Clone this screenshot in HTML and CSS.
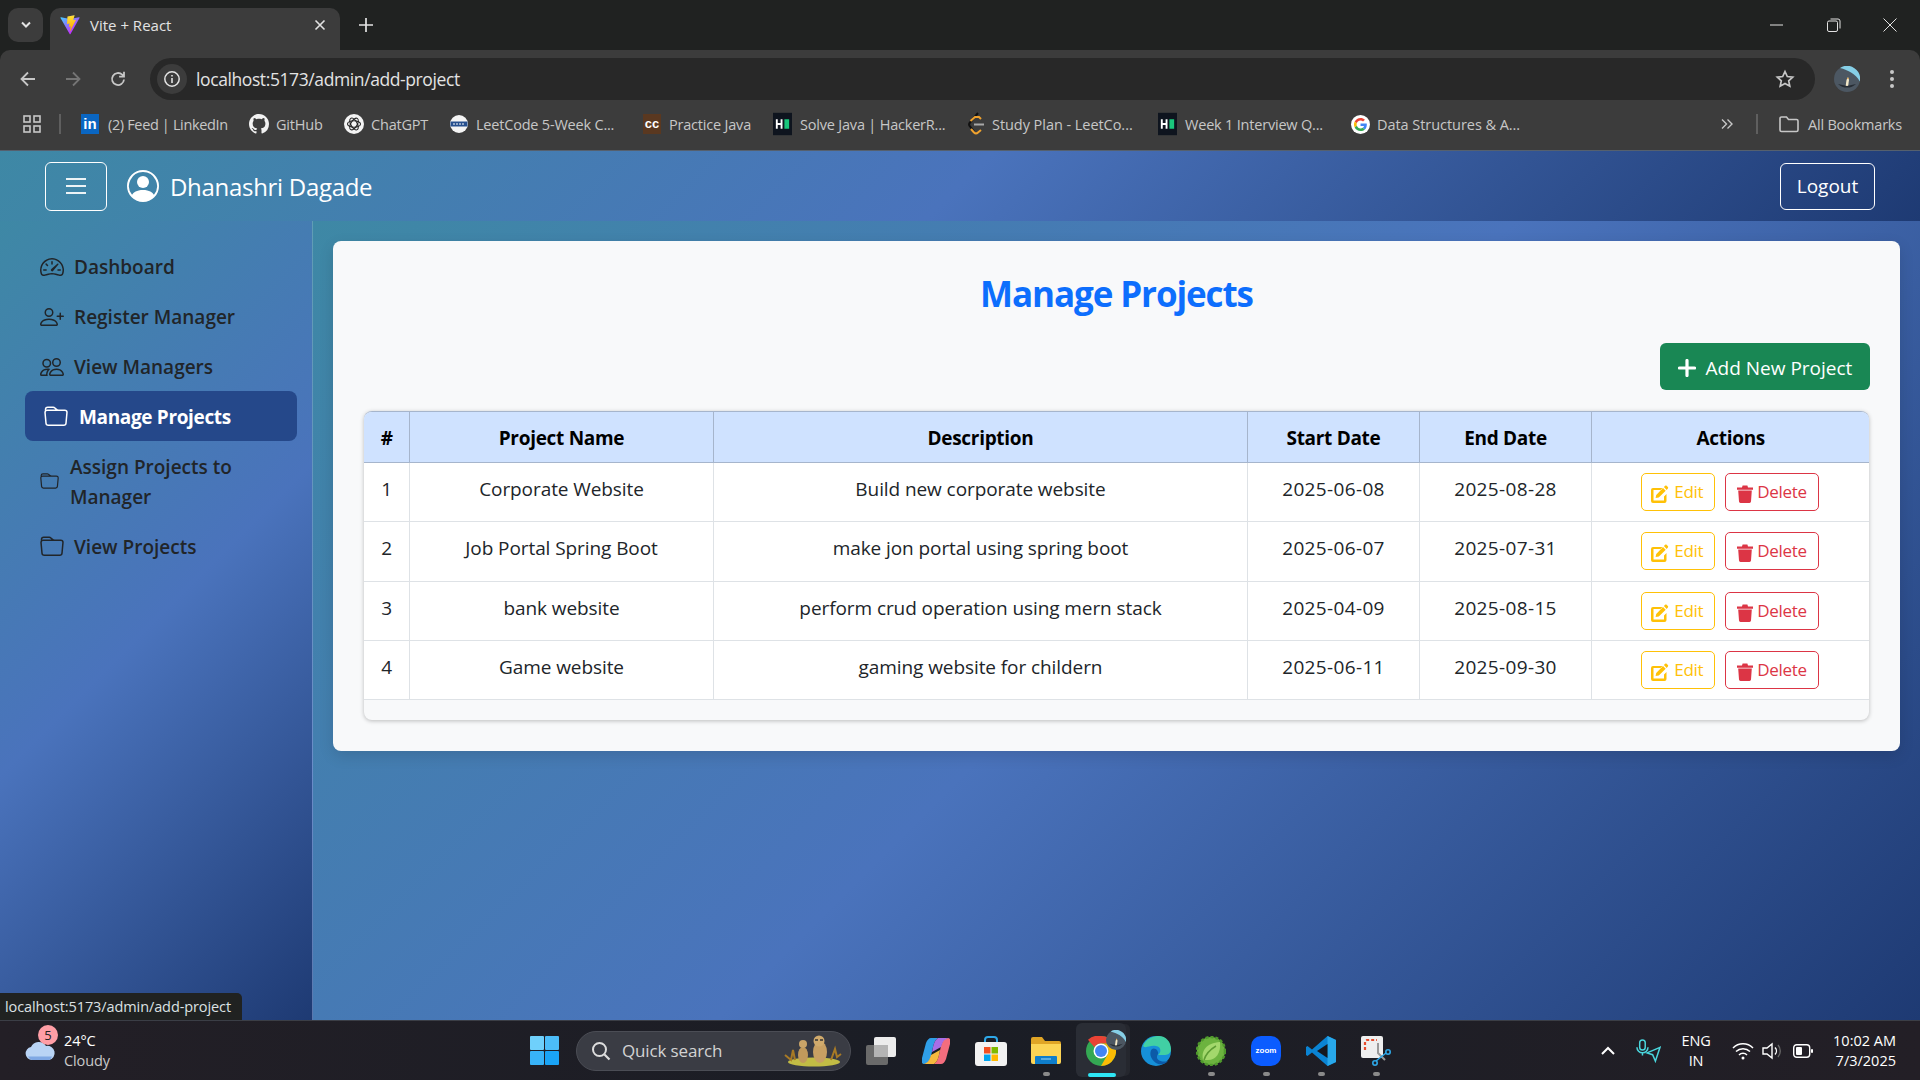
FILE: index.html
```html
<!DOCTYPE html>
<html lang="en">
<head>
<meta charset="utf-8">
<title>Vite + React</title>
<link rel="stylesheet" href="styles.css">
</head>
<body>
<svg class="defs" width="0" height="0">
  <defs>
    <linearGradient id="vite-a" gradientUnits="userSpaceOnUse" x1="6" y1="33" x2="235" y2="344"><stop offset="0" stop-color="#41D1FF"/><stop offset="1" stop-color="#BD34FE"/></linearGradient>
    <linearGradient id="vite-b" gradientUnits="userSpaceOnUse" x1="194.650" y1="8.800" x2="236.080" y2="292.990"><stop offset="0" stop-color="#FFEA83"/><stop offset=".08" stop-color="#FFDD35"/><stop offset="1" stop-color="#FFA800"/></linearGradient>
  </defs>
  <symbol id="i-folder" viewBox="0 0 16 16"><path d="M.54 3.87.5 3a2 2 0 0 1 2-2h3.672a2 2 0 0 1 1.414.586l.828.828A2 2 0 0 0 9.828 3h3.982a2 2 0 0 1 1.992 2.181l-.637 7A2 2 0 0 1 13.174 14H2.826a2 2 0 0 1-1.991-1.819l-.637-7a2 2 0 0 1 .342-1.31zM2.19 4a1 1 0 0 0-.996 1.09l.637 7a1 1 0 0 0 .995.91h10.348a1 1 0 0 0 .995-.91l.637-7A1 1 0 0 0 13.81 4zm4.69-1.707A1 1 0 0 0 6.172 2H2.5a1 1 0 0 0-1 .981l.006.139q.323-.119.684-.12h5.396z"/></symbol>
  <symbol id="i-edit" viewBox="0 0 18 18"><path d="M16.9 1.9 15.6.8c-.4-.4-1-.4-1.4 0l-1.3 1.3 2.8 2.8 1.2-1.3c.4-.5.4-1.2 0-1.7zM12 3 5.2 9.9l-.6 3.2 3.2-.6L14.700 5.700z"/><path d="M13 15.500H2.500V5h7l2-2H2A2 2 0 0 0 0 5v11a2 2 0 0 0 2 2h11.500a2 2 0 0 0 2-2V9l-2.500 2.500z"/></symbol>
  <symbol id="i-trash" viewBox="0 0 16 18"><path d="M0 2.500h5L5.600.600h4.800L11 2.500h5v2.200H0zM1.200 5.600h13.600l-.8 11a1.500 1.500 0 0 1-1.500 1.400H3.500A1.500 1.500 0 0 1 2 16.600z"/></symbol>
  <symbol id="i-hr" viewBox="0 0 20 24"><rect width="20" height="24" fill="#0e141e"/><path d="M3 7h2v4h3V7h2v10H8v-4H5v4H3z" fill="#fff"/><rect x="12" y="7" width="5" height="10" fill="#1ac77c"/></symbol>
  <symbol id="i-avatar" viewBox="0 0 26 26"><circle cx="13" cy="13" r="13" fill="#4c5762"/><path d="M6 2a13 13 0 0 1 19.800 13.500C22 8 14 4 6 2z" fill="#86cfe6"/><path d="M11.500 21l1-7 1.500-3 1 3-1 7z" fill="#f4e9c9"/><path d="M13.200 13l.8-2 .6 2z" fill="#f0a030"/><path d="M4 18a13 13 0 0 0 18 0l-9 2z" fill="#262c33"/></symbol>
</svg>

<header class="titlebar">
  <div class="tab-search"><svg width="12" height="8" viewBox="0 0 12 8"><path d="M2 1.500 6 5.500l4-4" fill="none" stroke="#e3e3e3" stroke-width="2"/></svg></div>
  <div class="tab">
    <svg class="favicon" width="20" height="20" viewBox="0 0 410 404"><path d="M399.641 59.525L215.643 388.545C211.844 395.338 202.084 395.378 198.228 388.618L10.582 59.556C6.381 52.190 12.680 43.270 21.028 44.760L205.223 77.682C206.398 77.892 207.601 77.890 208.776 77.676L389.119 44.806C397.439 43.289 403.768 52.140 399.641 59.525Z" fill="url(#vite-a)"/><path d="M292.965 1.574L156.801 28.255C154.563 28.694 152.906 30.590 152.771 32.866L144.395 174.330C144.198 177.662 147.258 180.248 150.510 179.498L188.420 170.749C191.967 169.931 195.172 173.055 194.443 176.622L183.180 231.775C182.422 235.487 185.907 238.661 189.532 237.560L212.947 230.446C216.577 229.344 220.065 232.527 219.297 236.242L201.398 322.875C200.278 328.294 207.486 331.249 210.492 326.603L212.500 323.500L323.454 102.072C325.312 98.365 322.108 94.137 318.036 94.923L279.014 102.454C275.347 103.161 272.227 99.746 273.262 96.158L298.731 7.867C299.767 4.273 296.636 .855 292.965 1.574Z" fill="url(#vite-b)"/></svg>
    <span class="tab-title">Vite + React</span>
    <svg class="tab-x" width="12" height="12" viewBox="0 0 12 12"><path d="M1.500 1.500l9 9m0-9-9 9" stroke="#e3e3e3" stroke-width="1.600"/></svg>
  </div>
  <svg class="newtab" width="14" height="14" viewBox="0 0 14 14"><path d="M7 0v14M0 7h14" stroke="#e3e3e3" stroke-width="1.700"/></svg>
  <div class="winctl">
    <svg width="14" height="14" viewBox="0 0 14 14"><path d="M0 7h13" stroke="#e3e3e3" stroke-width="1"/></svg>
    <svg width="14" height="14" viewBox="0 0 14 14"><rect x=".5" y="3" width="10" height="10.500" rx="1.500" fill="none" stroke="#e3e3e3"/><path d="M3.500 1h7.500a2 2 0 0 1 2 2v7.500" fill="none" stroke="#e3e3e3"/></svg>
    <svg width="14" height="14" viewBox="0 0 14 14"><path d="M.5.500l13 13m0-13-13 13" stroke="#e3e3e3"/></svg>
  </div>
</header>

<div class="toolbar">
  <div class="navbtns">
    <svg width="18" height="18" viewBox="0 0 18 18"><path d="M16 9H3m6-6.500L2.500 9 9 15.500" fill="none" stroke="#c7c7c7" stroke-width="1.800"/></svg>
    <svg width="18" height="18" viewBox="0 0 18 18"><path d="M2 9h13M9 2.500 15.500 9 9 15.500" fill="none" stroke="#757575" stroke-width="1.800"/></svg>
    <svg width="18" height="18" viewBox="0 0 18 18"><path d="M15 9.500A6 6 0 1 1 13.200 4.700L15 6.500M15 1.800v4.900h-4.900" fill="none" stroke="#c7c7c7" stroke-width="1.800"/></svg>
  </div>
  <div class="omnibox">
    <div class="info"><svg width="18" height="18" viewBox="0 0 18 18"><circle cx="9" cy="9" r="7.200" fill="none" stroke="#e3e3e3" stroke-width="1.500"/><path d="M9 8v5M9 5v1.500" stroke="#e3e3e3" stroke-width="1.600"/></svg></div>
    <span class="url">localhost:5173/admin/add-project</span>
    <svg class="star" width="20" height="20" viewBox="0 0 20 20"><path d="M10 2.500l2.300 5 5.400.6-4 3.700 1.100 5.400L10 14.500l-4.800 2.700 1.100-5.400-4-3.700 5.400-.6z" fill="none" stroke="#c7c7c7" stroke-width="1.700"/></svg>
  </div>
  <svg class="avatar" width="26" height="26"><use href="#i-avatar"/></svg>
  <svg class="dots" width="4" height="18" viewBox="0 0 4 18"><circle cx="2" cy="2" r="2" fill="#c7c7c7"/><circle cx="2" cy="9" r="2" fill="#c7c7c7"/><circle cx="2" cy="16" r="2" fill="#c7c7c7"/></svg>
</div>

<nav class="bookmarks">
  <svg class="apps" width="18" height="18" viewBox="0 0 18 18"><g fill="none" stroke="#c7c7c7" stroke-width="1.600"><rect x="1" y="1" width="6" height="6"/><rect x="11" y="1" width="6" height="6"/><rect x="1" y="11" width="6" height="6"/><rect x="11" y="11" width="6" height="6"/></g></svg>
  <span class="bm-sep"></span>
  <a class="bm bm-li"><span class="li-icon">in</span><span>(2) Feed | LinkedIn</span></a>
  <a class="bm bm-gh"><svg width="20" height="20" viewBox="0 0 16 16" fill="#f2f2f2"><path d="M8 0C3.580 0 0 3.580 0 8c0 3.540 2.290 6.530 5.470 7.590.4.070.55-.17.55-.38 0-.19-.01-.82-.01-1.490-2.010.37-2.530-.49-2.690-.94-.09-.23-.48-.94-.82-1.130-.28-.15-.68-.52-.01-.53.63-.01 1.080.58 1.230.82.72 1.210 1.870.87 2.330.66.070-.52.28-.87.51-1.070-1.780-.2-3.640-.89-3.640-3.950 0-.87.31-1.590.82-2.150-.08-.2-.36-1.020.08-2.120 0 0 .67-.21 2.200.82.64-.18 1.320-.27 2-.27s1.360.09 2 .27c1.530-1.040 2.200-.82 2.200-.82.44 1.100.16 1.920.08 2.120.51.56.82 1.270.82 2.150 0 3.070-1.870 3.750-3.650 3.950.29.25.54.73.54 1.480 0 1.070-.01 1.930-.01 2.200 0 .21.15.46.55.38A8.010 8.010 0 0 0 16 8c0-4.420-3.580-8-8-8"/></svg><span>GitHub</span></a>
  <a class="bm bm-gpt"><svg width="20" height="20" viewBox="0 0 20 20"><circle cx="10" cy="10" r="10" fill="#f4f4f4"/><g fill="none" stroke="#222" stroke-width="1.100"><ellipse cx="10" cy="10" rx="6.500" ry="3.200"/><ellipse cx="10" cy="10" rx="6.500" ry="3.200" transform="rotate(60 10 10)"/><ellipse cx="10" cy="10" rx="6.500" ry="3.200" transform="rotate(120 10 10)"/></g></svg><span>ChatGPT</span></a>
  <a class="bm bm-lc"><svg width="18" height="18" viewBox="0 0 18 18"><circle cx="9" cy="9" r="9" fill="#f4f4f4"/><path d="M.5 6.500h17v5H.5z" fill="#27508f"/><path d="M3 9h12" stroke="#fff" stroke-width="1" stroke-dasharray="2 1"/></svg><span>LeetCode 5-Week C...</span></a>
  <a class="bm bm-cc"><span class="cc-icon">cc</span><span>Practice Java</span></a>
  <a class="bm bm-hr1"><svg width="19" height="24" viewBox="0 0 20 24"><use href="#i-hr"/></svg><span>Solve Java | HackerR...</span></a>
  <a class="bm bm-plan"><svg width="18" height="24" viewBox="0 0 18 24"><path d="M11 1 3 10.500a3 3 0 0 0 0 4l4 5" fill="none" stroke="#111" stroke-width="2"/><path d="M4 17l3 3.500a3 3 0 0 0 4 0l3-2.500M3.500 9 8 5h4l2 2" fill="none" stroke="#f0a22e" stroke-width="2"/><path d="M7 12.500h10" stroke="#a8a8a8" stroke-width="2"/></svg><span>Study Plan - LeetCo...</span></a>
  <a class="bm bm-hr2"><svg width="19" height="24" viewBox="0 0 20 24"><use href="#i-hr"/></svg><span>Week 1 Interview Q...</span></a>
  <a class="bm bm-g"><svg width="19" height="19" viewBox="0 0 48 48"><circle cx="24" cy="24" r="24" fill="#fff"/><g transform="translate(7.500 7.500) scale(.69)"><path fill="#EA4335" d="M24 9.500c3.500 0 6.700 1.200 9.200 3.600l6.900-6.900C35.900 2.400 30.500 0 24 0 14.600 0 6.500 5.400 2.600 13.200l8 6.200C12.500 13.700 17.800 9.500 24 9.500z"/><path fill="#4285F4" d="M47 24.500c0-1.600-.1-3.100-.4-4.500H24v9h12.900c-.6 3-2.200 5.500-4.700 7.200l7.700 6C44.400 38 47 31.900 47 24.500z"/><path fill="#FBBC05" d="M10.500 28.600c-.5-1.500-.8-3-.8-4.600s.3-3.200.8-4.600l-8-6.200C.9 16.500 0 20.100 0 24s.9 7.500 2.600 10.800z"/><path fill="#34A853" d="M24 48c6.500 0 11.900-2.100 15.900-5.800l-7.700-6c-2.100 1.400-4.900 2.300-8.200 2.300-6.300 0-11.500-4.200-13.400-9.900l-8 6.200C6.500 42.600 14.600 48 24 48z"/></g></svg><span>Data Structures &amp; A...</span></a>
  <span class="bm-spacer"></span>
  <svg class="more" width="12" height="12" viewBox="0 0 12 12"><path d="M1 1.500 5.500 6 1 10.500M6.500 1.500 11 6l-4.500 4.500" fill="none" stroke="#c7c7c7" stroke-width="1.400"/></svg>
  <span class="bm-sep bm-sep2"></span>
  <a class="bm bm-all"><svg width="20" height="20" viewBox="0 0 20 20"><path d="M1 4.500a1.500 1.500 0 0 1 1.500-1.500h5l2 2.500h8A1.500 1.500 0 0 1 19 7v9a1.500 1.500 0 0 1-1.500 1.500h-15A1.500 1.500 0 0 1 1 16z" fill="none" stroke="#c7c7c7" stroke-width="1.600"/></svg><span>All Bookmarks</span></a>
</nav>

<div class="app">
  <div class="topnav">
    <button class="burger"><svg width="24" height="20" viewBox="0 0 24 20"><path d="M2 3h20M2 10h20M2 17h20" stroke="#fff" stroke-width="1.800" opacity=".9"/></svg></button>
    <svg class="user" width="32" height="32" viewBox="0 0 16 16" fill="#fff"><path d="M11 6a3 3 0 1 1-6 0 3 3 0 0 1 6 0"/><path fill-rule="evenodd" d="M0 8a8 8 0 1 1 16 0A8 8 0 0 1 0 8m8-7a7 7 0 0 0-5.468 11.370C3.242 11.226 4.805 10 8 10s4.757 1.225 5.468 2.370A7 7 0 0 0 8 1"/></svg>
    <span class="brand">Dhanashri Dagade</span>
    <button class="logout">Logout</button>
  </div>
  <div class="content">
    <aside class="sidebar">
      <a class="item"><svg class="ico" viewBox="0 0 16 16"><path d="M8 4a.5.5 0 0 1 .5.500V6a.5.5 0 0 1-1 0V4.500A.5.5 0 0 1 8 4M3.732 5.732a.5.5 0 0 1 .707 0l.915.914a.5.5 0 1 1-.708.708l-.914-.915a.5.5 0 0 1 0-.707M2 10a.5.5 0 0 1 .5-.5h1.586a.5.5 0 0 1 0 1H2.500A.5.5 0 0 1 2 10m9.500 0a.5.5 0 0 1 .5-.5h1.500a.5.5 0 0 1 0 1H12a.5.5 0 0 1-.5-.5m.754-4.246a.39.39 0 0 0-.527-.02L7.547 9.310a.91.91 0 1 0 1.302 1.258l3.434-4.297a.39.39 0 0 0-.029-.518z"/><path fill-rule="evenodd" d="M0 10a8 8 0 1 1 15.547 2.661c-.442 1.253-1.845 1.602-2.932 1.250C11.309 13.488 9.475 13 8 13c-1.474 0-3.310.488-4.615.911-1.087.352-2.490.003-2.932-1.250A8 8 0 0 1 0 10m8-7a7 7 0 0 0-6.603 9.329c.203.575.923.876 1.680.630C4.397 12.533 6.358 12 8 12s3.604.532 4.923.96c.757.245 1.477-.056 1.680-.631A7 7 0 0 0 8 3"/></svg><span>Dashboard</span></a>
      <a class="item"><svg class="ico" viewBox="0 0 16 16"><path d="M6 8a3 3 0 1 0 0-6 3 3 0 0 0 0 6m2-3a2 2 0 1 1-4 0 2 2 0 0 1 4 0m4 8c0 1-1 1-1 1H1s-1 0-1-1 1-4 6-4 6 3 6 4m-1-.004c-.001-.246-.154-.986-.832-1.664C9.516 10.680 8.289 10 6 10s-3.516.680-4.168 1.332c-.678.678-.83 1.418-.832 1.664z"/><path fill-rule="evenodd" d="M13.500 5a.5.5 0 0 1 .5.500V7h1.500a.5.5 0 0 1 0 1H14v1.500a.5.5 0 0 1-1 0V8h-1.500a.5.5 0 0 1 0-1H13V5.500a.5.5 0 0 1 .5-.5"/></svg><span>Register Manager</span></a>
      <a class="item"><svg class="ico" viewBox="0 0 16 16"><path d="M15 14s1 0 1-1-1-4-5-4-5 3-5 4 1 1 1 1zm-7.978-1L7 12.996c.001-.264.167-1.030.76-1.720C8.312 10.629 9.282 10 11 10c1.717 0 2.687.63 3.240 1.276.593.69.758 1.457.76 1.720l-.008.002-.014.002zM11 7a2 2 0 1 0 0-4 2 2 0 0 0 0 4m3-2a3 3 0 1 1-6 0 3 3 0 0 1 6 0M6.936 9.280a6 6 0 0 0-1.230-.247A7 7 0 0 0 5 9c-4 0-5 3-5 4q0 1 1 1h4.216A2.240 2.240 0 0 1 5 13c0-1.010.377-2.042 1.090-2.904.243-.294.526-.569.846-.816M4.920 10A5.500 5.500 0 0 0 4 13H1c0-.26.164-1.030.76-1.724.545-.636 1.492-1.256 3.160-1.275ZM1.500 5.500a3 3 0 1 1 6 0 3 3 0 0 1-6 0m3-2a2 2 0 1 0 0 4 2 2 0 0 0 0-4"/></svg><span>View Managers</span></a>
      <a class="item active"><svg class="ico"><use href="#i-folder"/></svg><span>Manage Projects</span></a>
      <a class="item item-wrap"><svg class="ico"><use href="#i-folder"/></svg><span>Assign Projects to Manager</span></a>
      <a class="item"><svg class="ico"><use href="#i-folder"/></svg><span>View Projects</span></a>
    </aside>
    <main class="main">
      <section class="card">
        <h1 class="title">Manage Projects</h1>
        <div class="actions">
          <button class="add"><svg width="18" height="18" viewBox="0 0 18 18"><path d="M9 1.500v15M1.500 9h15" stroke="#fff" stroke-width="3.200" stroke-linecap="round"/></svg>Add New Project</button>
        </div>
        <div class="table-wrap">
          <table class="projects">
            <colgroup><col class="c-n"><col class="c-name"><col class="c-desc"><col class="c-date"><col class="c-date"><col class="c-act"></colgroup>
            <thead><tr><th>#</th><th>Project Name</th><th>Description</th><th>Start Date</th><th>End Date</th><th>Actions</th></tr></thead>
            <tbody>
              <tr><td>1</td><td>Corporate Website</td><td>Build new corporate website</td><td>2025-06-08</td><td>2025-08-28</td><td><a class="btn btn-edit"><svg class="bico"><use href="#i-edit"/></svg>Edit</a><a class="btn btn-del"><svg class="bico"><use href="#i-trash"/></svg>Delete</a></td></tr>
              <tr><td>2</td><td>Job Portal Spring Boot</td><td>make jon portal using spring boot</td><td>2025-06-07</td><td>2025-07-31</td><td><a class="btn btn-edit"><svg class="bico"><use href="#i-edit"/></svg>Edit</a><a class="btn btn-del"><svg class="bico"><use href="#i-trash"/></svg>Delete</a></td></tr>
              <tr><td>3</td><td>bank website</td><td>perform crud operation using mern stack</td><td>2025-04-09</td><td>2025-08-15</td><td><a class="btn btn-edit"><svg class="bico"><use href="#i-edit"/></svg>Edit</a><a class="btn btn-del"><svg class="bico"><use href="#i-trash"/></svg>Delete</a></td></tr>
              <tr><td>4</td><td>Game website</td><td>gaming website for childern</td><td>2025-06-11</td><td>2025-09-30</td><td><a class="btn btn-edit"><svg class="bico"><use href="#i-edit"/></svg>Edit</a><a class="btn btn-del"><svg class="bico"><use href="#i-trash"/></svg>Delete</a></td></tr>
            </tbody>
          </table>
        </div>
      </section>
    </main>
  </div>
  <div class="status">localhost:5173/admin/add-project</div>
</div>

<footer class="taskbar">
  <div class="weather">
    <div class="wx-icon">
      <svg width="32" height="20" viewBox="0 0 32 20"><path d="M8 19a6.500 6.500 0 0 1-1-12.900A8.500 8.500 0 0 1 22 5a7 7 0 0 1 3 14z" fill="#b9d4f5"/><path d="M4 15.500h24a5 5 0 0 1-3 3.500H8a6 6 0 0 1-4-3.500z" fill="#7fa8e4"/></svg>
      <span class="wx-badge">5</span>
    </div>
    <div class="wx-text"><span class="wx-temp">24°C</span><span class="wx-cond">Cloudy</span></div>
  </div>
  <div class="tasks">
    <div class="slot win"><svg width="29" height="29" viewBox="0 0 29 29"><rect width="14" height="14" rx="1" fill="#6fd0fb"/><rect x="15" width="14" height="14" rx="1" fill="#4cbdf9"/><rect y="15" width="14" height="14" rx="1" fill="#38b3f8"/><rect x="15" y="15" width="14" height="14" rx="1" fill="#1aa4f6"/></svg></div>
    <div class="search">
      <svg width="20" height="20" viewBox="0 0 20 20"><circle cx="8.500" cy="8.500" r="6.500" fill="none" stroke="#ddd" stroke-width="2"/><path d="M13.500 13.500l5 5" stroke="#ddd" stroke-width="2.200"/></svg>
      <span class="search-text">Quick search</span>
      <svg class="meerkats" width="62" height="32" viewBox="0 0 62 32"><ellipse cx="32" cy="27" rx="26" ry="4.500" fill="#c2bc45"/><path d="M3 20l6 5 2-10 2 10m36 0 4-11 2 8 4-3" fill="none" stroke="#a87a25" stroke-width="2"/><ellipse cx="21" cy="20" rx="5" ry="8" fill="#c19a5c"/><circle cx="21" cy="9" r="4" fill="#c9a468"/><ellipse cx="38" cy="17" rx="7" ry="11" fill="#c8a063"/><circle cx="37" cy="6" r="5.500" fill="#d0aa6c"/><path d="M33 5h3m2 0h3" stroke="#333" stroke-width="1.500"/></svg>
    </div>
    <div class="slot"><svg width="30" height="28" viewBox="0 0 30 28"><rect y="8" width="22" height="20" rx="2" fill="#6a6a6a"/><rect x="8" width="22" height="20" rx="2" fill="#ececec"/><rect x="8" y="8" width="14" height="12" fill="#b4b4b4"/></svg></div>
    <div class="slot"><svg width="28" height="28" viewBox="0 0 28 28"><path d="M9 1h7c-3 2-4 5-5 9l-2 9c-1 5-4 8-7 8-2 0-3-2-2-6L4 6C5 3 7 1 9 1z" fill="#2f9fe8"/><path d="M19 27h-7c3-2 4-5 5-9l2-9c1-5 4-8 7-8 2 0 3 2 2 6l-4 15c-1 3-3 5-5 5z" fill="#f36d7e"/><path d="M16 1c-3 2-4 5-5 9l-1 5 9-5 1-3c1-3 3-5 6-6z" fill="#a86ee6"/><path d="M12 27c3-2 4-5 5-9l1-5-9 5-1 3c-1 3-3 5-6 6z" fill="#f5b93e"/></svg></div>
    <div class="slot"><svg width="32" height="30" viewBox="0 0 32 30"><path d="M10 8V4a3 3 0 0 1 3-3h6a3 3 0 0 1 3 3v4" fill="none" stroke="#2ea8e8" stroke-width="2"/><rect y="6" width="32" height="24" rx="3" fill="#f2f2f2"/><rect x="9" y="11" width="6.500" height="6.500" fill="#f25022"/><rect x="16.500" y="11" width="6.500" height="6.500" fill="#7fba00"/><rect x="9" y="18.500" width="6.500" height="6.500" fill="#00a4ef"/><rect x="16.500" y="18.500" width="6.500" height="6.500" fill="#ffb900"/></svg></div>
    <div class="slot run"><svg width="30" height="27" viewBox="0 0 30 27"><path d="M0 2a2 2 0 0 1 2-2h9l3 4h14a2 2 0 0 1 2 2v4H0z" fill="#e0a526"/><path d="M0 7h30v18a2 2 0 0 1-2 2H2a2 2 0 0 1-2-2z" fill="#fcd455"/><path d="M5 19h20a1 1 0 0 1 1 1v7H4v-7a1 1 0 0 1 1-1z" fill="#0f7ecb"/><path d="M10 22h10" stroke="#8ccbf0" stroke-width="1.200"/></svg></div>
    <div class="slot run-on">
      <span class="active-box"></span>
      <svg class="chrome" width="30" height="30" viewBox="0 0 30 30"><circle cx="15" cy="15" r="15" fill="#34a853"/><path d="M15 0a15 15 0 0 1 13 7.500H15a7.500 7.500 0 0 0-6.500 3.750L2 3.800A15 15 0 0 1 15 0z" fill="#ea4335"/><path d="M28 7.500A15 15 0 0 1 15 30l6.500-11.250A7.500 7.500 0 0 0 15 7.500z" fill="#fbbc05"/><circle cx="15" cy="15" r="7.500" fill="#fff"/><circle cx="15" cy="15" r="6" fill="#4285f4"/></svg>
      <svg class="chrome-badge" width="20" height="20"><use href="#i-avatar"/></svg>
    </div>
    <div class="slot"><svg width="30" height="30" viewBox="0 0 30 30"><circle cx="15" cy="15" r="15" fill="#1690d8"/><path d="M2 10C5 2 13 0 18 0c7 0 12 6 12 13 0 5-4 6-7 6h-6c3-2 4-8-2-9-7-1-10 3-13 0z" fill="#41cfa4"/><path d="M11 13c-3 3-2 10 4 14 3 2 9 2 12-2-6 2-14-1-10-7 1-3-3-7-6-5z" fill="#0c5aa8"/></svg></div>
    <div class="slot run"><svg width="30" height="30" viewBox="0 0 30 30"><circle cx="15" cy="15" r="14" fill="#6cb33f" stroke="#4f9a2c" stroke-dasharray="3 2" stroke-width="2.500"/><path d="M7 24C5 15 10 7 24 6c1 11-4 18-12 18-2 0-3 0-5 0z" fill="#a3d86c"/><path d="M8 24c2-7 7-11 12-14" fill="none" stroke="#5d9c34" stroke-width="1.500"/></svg></div>
    <div class="slot run"><div class="zoom-ico">zoom</div></div>
    <div class="slot run"><svg width="30" height="30" viewBox="0 0 30 30"><path d="M21.500 0 30 4v22l-8.500 4L6 16.500 1.500 20 0 19v-8l1.500-1L6 13.500z" fill="#0a84d4"/><path d="M21.500 0 30 4v22l-8.500 4z" fill="#28a8ea"/><path d="M21.500 8v14L11 15z" fill="#15181f"/></svg></div>
    <div class="slot run"><svg width="30" height="30" viewBox="0 0 30 30"><rect width="22" height="22" rx="2" fill="#efefef"/><path d="M4 14V6a2 2 0 0 1 2-2h10" fill="none" stroke="#e74c2e" stroke-width="2.200" stroke-dasharray="3 2"/><path d="M17 7v10l7 7M20 16" fill="none" stroke="#9a9a9a" stroke-width="2"/><circle cx="27" cy="16" r="2.200" fill="none" stroke="#2ea8e8" stroke-width="1.600"/><circle cx="14" cy="27" r="2.200" fill="none" stroke="#2ea8e8" stroke-width="1.600"/><path d="M15 25l10-8" stroke="#2ea8e8" stroke-width="1.600"/></svg></div>
  </div>
  <div class="tray">
    <svg class="chev" width="14" height="9" viewBox="0 0 14 9"><path d="M1 8l6-6 6 6" fill="none" stroke="#fff" stroke-width="2"/></svg>
    <svg class="tray-app" width="26" height="24" viewBox="0 0 28 26"><g fill="none" stroke="#4ad6dd" stroke-width="1.600"><rect x="5" y="1" width="6" height="11" rx="3"/><path d="M2 9a6 6 0 0 0 12 0M8 15v3"/><path d="M27 9 13 15l6 2 3 7z"/></g></svg>
    <div class="lang"><span>ENG</span><span>IN</span></div>
    <svg width="22" height="18" viewBox="0 0 22 18"><g fill="none" stroke="#fff" stroke-width="1.500"><path d="M1 6a14 14 0 0 1 20 0M4 9.500a10 10 0 0 1 14 0M7 13a5.500 5.500 0 0 1 8 0"/></g><circle cx="11" cy="16" r="1.500" fill="#fff"/></svg>
    <svg class="vol" width="20" height="18" viewBox="0 0 20 18"><path d="M1 6h4l5-4v14l-5-4H1z" fill="none" stroke="#fff" stroke-width="1.400"/><path d="M13 5.500a5 5 0 0 1 0 7" fill="none" stroke="#fff" stroke-width="1.400"/><path d="M16 3a9 9 0 0 1 0 12" fill="none" stroke="#666" stroke-width="1.400"/></svg>
    <svg class="batt" width="20" height="14" viewBox="0 0 20 14"><rect x=".7" y=".7" width="16" height="12.600" rx="3" fill="none" stroke="#fff" stroke-width="1.400"/><rect x="3" y="3" width="6" height="8" rx="1" fill="#fff"/><rect x="18" y="5" width="2" height="4" rx="1" fill="#fff"/></svg>
    <div class="clock"><span>10:02 AM</span><span>7/3/2025</span></div>
  </div>
</footer>
</body>
</html>
```
FILE: styles.css
```css
* { box-sizing: border-box; }
html, body { margin: 0; height: 100%; }
body {
  width: 1920px; height: 1080px; overflow: hidden;
  display: flex; flex-direction: column;
  font-family: "Open Sans", "Noto Sans", "Liberation Sans", sans-serif;
  background: #202221;
}
.defs { position: absolute; }
svg { display: block; flex: none; }
button { font-family: inherit; cursor: pointer; }

/* browser chrome */
.titlebar { height: 50px; flex: none; background: #202221; display: flex; align-items: flex-start; position: relative; padding: 8px 0 0 8px; }
.tab-search { width: 35px; height: 34px; border-radius: 10px; background: #3c3c3c; display: flex; align-items: center; justify-content: center; }
.tab { width: 290px; height: 42px; margin-left: 7px; background: #3c3c3c; border-radius: 10px 10px 0 0; display: flex; align-items: center; padding: 0 14px 8px 10px; }
.tab-title { color: #e3e3e3; font-size: 15px; margin-left: 10px; flex: 1; }
.newtab { margin: 10px 0 0 19px; }
.winctl { margin-left: auto; display: flex; gap: 42.500px; padding: 10px 23px 0 0; }

.toolbar { height: 50px; flex: none; background: #3c3c3c; border-radius: 10px 10px 0 0; display: flex; align-items: flex-end; padding-left: 19px; }
.navbtns { display: flex; gap: 27px; height: 42px; align-items: center; margin-right: 23px; }
.omnibox { width: 1665px; height: 42px; background: #282828; border-radius: 21px; display: flex; align-items: center; padding: 0 20px 0 7px; }
.info { width: 30px; height: 30px; background: #3c3c3c; border-radius: 50%; display: flex; align-items: center; justify-content: center; }
.url { color: #e3e3e3; font-size: 17.500px; letter-spacing: -.4px; margin-left: 9px; flex: 1; }
.avatar { margin: 0 0 8px 19px; }
.dots { margin: 0 0 12px 30px; }

.bookmarks { height: 51px; flex: none; background: #3c3c3c; border-bottom: 1px solid #55606e; display: flex; align-items: center; padding: 0 0 2px 23px; color: #c7c7c7; font-size: 14.500px; letter-spacing: -.2px; }
.bm-sep { width: 2px; height: 20px; background: #5f5f5f; margin: 0 20px 0 18px; }
.bm { display: flex; align-items: center; gap: 8px; white-space: nowrap; flex: none; }
.bm-li { gap: 9px; letter-spacing: -.35px; width: 168px; }
.bm-gh { width: 95px; gap: 7px; }
.bm-gpt { width: 106px; gap: 7px; }
.bm-lc { width: 193px; }
.bm-cc { width: 130px; }
.bm-hr1 { width: 194px; }
.bm-plan { width: 191px; gap: 7px; letter-spacing: -.05px; }
.bm-hr2 { width: 193px; }
.bm-g { width: 190px; gap: 7px; letter-spacing: -.05px; }
.li-icon { width: 18px; height: 20px; background: #0a66c2; color: #fff; font: 700 15px/20px "Liberation Sans", sans-serif; text-align: center; letter-spacing: 0; }
.cc-icon { width: 18px; height: 20px; background: #5a3820; color: #fff; font: 700 13px/19px "Liberation Sans", sans-serif; text-align: center; letter-spacing: 0; }
.bm-spacer { flex: 1; }
.bm-sep2 { margin: 0 21px 0 23px; }
.bm-all { margin-right: 18px; gap: 9px; }

/* app */
.app { flex: none; height: 869px; display: flex; flex-direction: column; position: relative; }
.topnav { height: 70px; flex: none; display: flex; align-items: center; padding: 0 45px; background: linear-gradient(135deg, #3e88a5 0%, #4a73bc 50%, #1e3a73 100%); }
.burger { width: 62px; height: 49px; background: transparent; border: 1px solid #fff; border-radius: 6px; display: flex; align-items: center; justify-content: center; padding: 0; }
.user { margin-left: 20px; }
.brand { color: #fff; font-size: 24px; letter-spacing: -.3px; margin-left: 11px; }
.logout { margin-left: auto; width: 95px; height: 47px; background: transparent; border: 1px solid #fff; border-radius: 6px; color: #fff; font-size: 19px; padding: 0; }
.content { flex: 1; display: flex; min-height: 0; }
.sidebar { width: 313px; flex: none; padding: 21px 15px 0 25px; border-right: 1px solid rgba(255,255,255,.18); background: linear-gradient(135deg, #3e88a5 0%, #4a73bc 50%, #1e3a73 100%); display: flex; flex-direction: column; }
.item { display: flex; align-items: center; gap: 10px; padding: 10px 15px; color: #212529; font-size: 19px; font-weight: 600; line-height: 30px; letter-spacing: 0; }
.ico { width: 24px; height: 24px; fill: #212529; }
.item.active { background: #25488a; color: #fff; border-radius: 8px; padding: 11px 20px 9px; font-weight: 700; height: 50px; margin-top: -1px; letter-spacing: -.35px; }
.active .ico { fill: #fff; margin-left: -1px; margin-right: 1px; }
.item-wrap { padding-top: 10.500px; padding-bottom: 10.500px; gap: 11px; }
.item-wrap .ico { width: 19px; height: 19px; }
.main { flex: 1; padding: 20px; background: linear-gradient(135deg, #3e88a5 0%, #4a73bc 50%, #1e3a73 100%); }
.card { background: #f8f9fa; border-radius: 8px; padding: 31px; box-shadow: 0 5px 15px rgba(0,0,0,.12); height: 510px; }
.title { margin: 0 0 23px; height: 48px; text-align: center; color: #0d6efd; font-size: 35px; line-height: 44px; font-weight: 700; letter-spacing: -1.100px; }
.actions { display: flex; justify-content: flex-end; margin: 0 -1px 21px 0; }
.add { width: 210px; height: 47px; background: #198754; color: #fff; border: 0; border-radius: 6px; font-size: 19px; display: flex; align-items: center; justify-content: center; gap: 10px; padding: 2px 0 0; }
.add svg { margin-top: 1px; }
.table-wrap { border-radius: 8px; overflow: hidden; box-shadow: 0 1px 4px rgba(0,0,0,.25); border-top: 1px solid #a6b5cc; height: 309px; }
.projects { width: 100%; border-collapse: collapse; table-layout: fixed; font-size: 19px; letter-spacing: -.08px; color: #212529; }
.c-n { width: 45px; } .c-name { width: 304px; } .c-desc { width: 534px; } .c-date { width: 172px; } .c-act { width: 278px; }
.projects th { background: #cfe2ff; color: #000; font-weight: 700; height: 50px; border: 1px solid #a6b5cc; padding: 2px 0 0 1px; border-top: 0; text-align: center; letter-spacing: -.3px; }
.projects td { height: 59px; border: 1px solid #dee2e6; background: #fff; padding: 12px 0 9px 1px; text-align: center; vertical-align: top; line-height: 28px; white-space: nowrap; }
.projects tbody tr:nth-child(2) td { height: 60px; }
.projects tr > :first-child { border-left: 0; }
.projects tr > :last-child { border-right: 0; }
.projects td:last-child { padding-left: 0; }
.projects td:nth-child(4), .projects td:nth-child(5) { letter-spacing: .35px; }
.btn { display: inline-flex; align-items: center; height: 38px; border: 1px solid; border-radius: 5px; font-size: 17px; line-height: 36px; vertical-align: top; background: #fff; padding: 0 9px; gap: 5px; letter-spacing: -.3px; margin-top: -2px; }
.bico { width: 18px; height: 18px; fill: currentColor; margin-top: 4px; }
.btn-edit { color: #ffc107; width: 74px; }
.btn-del { color: #dc3545; width: 94px; margin-left: 10px; padding: 0 8px 0 11px; gap: 4px; }
.btn-del .bico { width: 16px; }
.status { position: absolute; left: 0; bottom: 0; width: 242px; height: 27px; background: #202221; color: #dce1e3; font-size: 14.500px; letter-spacing: -.1px; line-height: 27px; padding-left: 5px; border-top-right-radius: 5px; white-space: nowrap; }

/* taskbar */
.taskbar { height: 60px; flex: none; display: flex; align-items: center; position: relative; color: #fff; border-top: 1px solid #3b3e46; background: linear-gradient(90deg, #231f26 0%, #1a1d25 50%, #231f26 100%); }
.weather { width: 518px; flex: none; display: flex; align-items: center; padding-left: 24px; gap: 8px; }
.wx-icon { position: relative; width: 32px; height: 20px; }
.wx-badge { position: absolute; left: 14px; top: -16px; width: 20px; height: 20px; border-radius: 50%; background: #ff9ea6; color: #222; font-size: 13px; line-height: 20px; text-align: center; }
.wx-text { display: flex; flex-direction: column; font-size: 14.500px; line-height: 20px; letter-spacing: -.1px; }
.wx-cond { color: #c9c9c9; }
.tasks { display: flex; align-items: center; }
.slot { width: 55px; height: 58px; display: flex; align-items: center; justify-content: center; position: relative; flex: none; }
.win svg { margin-right: 2px; }
.search { width: 275px; height: 40px; margin: 0 2.500px 0 3px; border-radius: 20px; background: #3a3c44; border: 1px solid #4b4d55; display: flex; align-items: center; padding: 0 6px 0 14px; flex: none; }
.search-text { color: #d3d3d3; font-size: 17px; letter-spacing: -.15px; margin-left: 11px; flex: 1; }
.run::after { content: ""; position: absolute; bottom: 4px; left: 24px; width: 7px; height: 4px; border-radius: 2px; background: #8a8a8a; }
.active-box { position: absolute; left: 2px; top: 1px; width: 50px; height: 54px; border-radius: 6px; background: #2a2d35; box-shadow: 5px 0 0 -1px #25272e; }
.run-on::after { content: ""; position: absolute; bottom: 3px; left: 14px; width: 28px; height: 4px; border-radius: 2px; background: #2ee6f5; }
.chrome { position: relative; }
.chrome-badge { position: absolute; left: 32px; top: 8px; }
.zoom-ico { width: 30px; height: 30px; border-radius: 10px; background: #0b5cff; color: #fff; font: 700 8px/30px "Liberation Sans", sans-serif; text-align: center; }
.tray { margin-left: auto; display: flex; align-items: center; padding-right: 24px; }
.chev { margin-right: 20px; }
.tray-app { margin-right: 15px; }
.lang { display: flex; flex-direction: column; align-items: center; font-size: 14.500px; line-height: 20px; width: 40px; margin-right: 16px; letter-spacing: -.1px; }
.vol { margin-left: 8px; }
.batt { margin-left: 11px; }
.clock { display: flex; flex-direction: column; align-items: flex-end; font-size: 14.500px; line-height: 20px; margin-left: 20px; }
```
